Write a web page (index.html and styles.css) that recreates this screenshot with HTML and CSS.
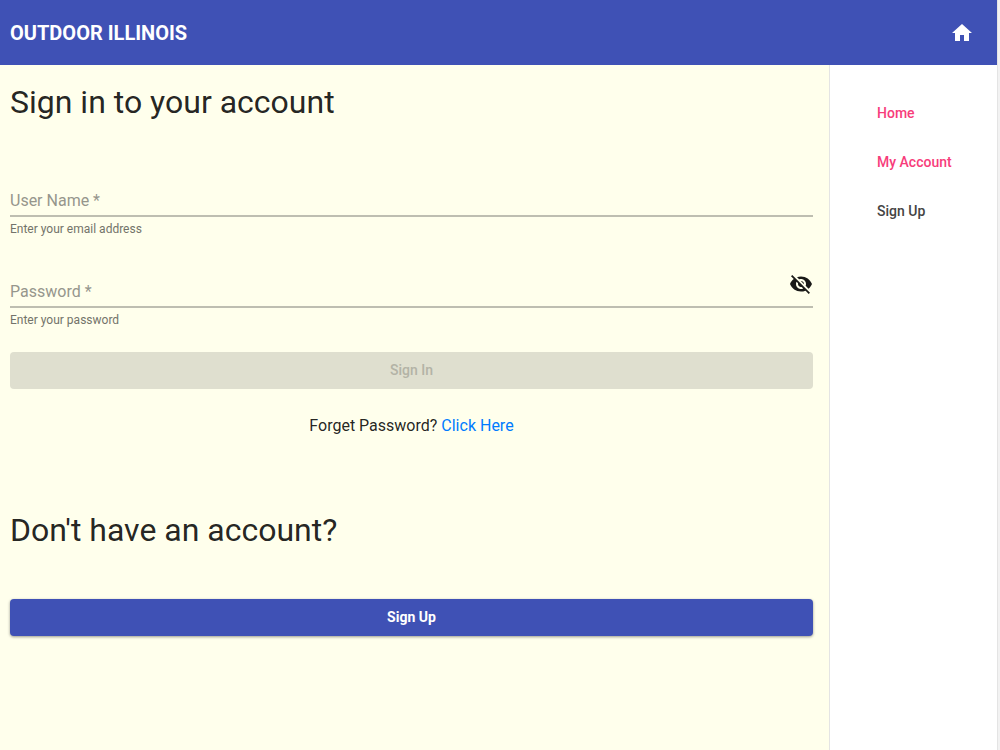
FILE: index.html
```html
<!DOCTYPE html>
<html lang="en">
<head>
    <meta charset="utf-8">
    <meta name="viewport" content="width=device-width, initial-scale=1">
    <title>Outdoor Illinois</title>
    <link rel="stylesheet" href="styles.css">
</head>

<body>
<div class="page">
    <header class="toolbar">
        <span class="brand">OUTDOOR ILLINOIS</span>
        <a class="home-link" href="#" aria-label="Home">
            <svg class="icon" viewBox="0 0 24 24"><path d="M10 20v-6h4v6h5v-8h3L12 3 2 12h3v8z"/></svg>
        </a>
    </header>

    <div class="container">
        <main class="content">
            <h1>Sign in to your account</h1>
            <form class="sign-in">
                <div class="field">
                    <div class="field-box">
                        <label for="userName">User Name *</label>
                        <input type="text" id="userName">
                    </div>
                    <div class="hint">Enter your email address</div>
                </div>

                <div class="field">
                    <div class="field-box">
                        <label for="password">Password *</label>
                        <input type="password" id="password">
                        <button class="toggle" type="button" aria-label="Show password">
                            <svg class="icon" viewBox="0 0 24 24"><path d="M12 7c2.760 0 5 2.240 5 5 0 .65-.13 1.260-.36 1.830l2.920 2.920c1.510-1.260 2.700-2.890 3.430-4.750-1.730-4.390-6-7.500-11-7.500-1.400 0-2.740.25-3.980.7l2.160 2.160C10.740 7.130 11.350 7 12 7zM2 4.270l2.280 2.280.46.46C3.080 8.300 1.780 10.020 1 12c1.730 4.390 6 7.500 11 7.500 1.550 0 3.030-.3 4.380-.84l.42.42L19.730 22 21 20.730 3.270 3 2 4.270zM7.530 9.800l1.550 1.550c-.05.21-.08.43-.08.65 0 1.660 1.340 3 3 3 .22 0 .44-.03.65-.08l1.550 1.550c-.67.33-1.410.53-2.200.53-2.760 0-5-2.240-5-5 0-.79.2-1.530.53-2.200zm4.310-.78l3.150 3.150.02-.16c0-1.660-1.340-3-3-3l-.17.01z"/></svg>
                        </button>
                    </div>
                    <div class="hint">Enter your password</div>
                </div>

                <button class="btn" type="submit" disabled>Sign In</button>
            </form>
            <p class="forgot">Forget Password? <a href="#">Click Here</a></p>

            <h2>Don't have an account?</h2>
            <button class="btn btn-primary" type="button">Sign Up</button>
        </main>

        <nav class="sidebar">
            <a class="accent" href="#">Home</a>
            <a class="accent" href="#">My Account</a>
            <a href="#">Sign Up</a>
        </nav>
    </div>
</div>
</body>
</html>
```

FILE: styles.css
```css
* {
    box-sizing: border-box;
}

body {
    margin: 0;
    padding-right: 2px;
    background-color: #f2f2f2;
    color: rgba(0, 0, 0, 0.87);
    font-family: Roboto, "Liberation Sans", sans-serif;
    font-size: 16px;
    line-height: 24px;
}

.page {
    display: flex;
    flex-direction: column;
    min-height: 100vh;
    border-right: 1px solid #e4e4e4;
    background-color: white;
}

.toolbar {
    display: flex;
    align-items: center;
    justify-content: space-between;
    padding: 21px 23px 20px 10px;
    background-color: #3f51b5;
    color: white;
}

.brand {
    font-size: 20px;
    font-weight: 700;
}

.home-link {
    display: flex;
    color: white;
}

.icon {
    display: block;
    width: 24px;
    height: 24px;
    fill: currentColor;
}

.container {
    display: flex;
    flex: 1;
}

.content {
    flex: 1;
    padding: 17px 16px 16px 10px;
    background-color: #ffffec;
}

h1, h2 {
    margin: 0;
    font-size: 32px;
    font-weight: 400;
    line-height: 40px;
}

.sign-in {
    padding-top: 67px;
}

.field {
    margin-bottom: 42px;
}

.field + .field {
    margin-bottom: 23px;
}

.field-box {
    display: grid;
    grid-template-columns: 1fr auto;
    align-items: center;
    border-bottom: 2px solid #bebeb1;
}

.field-box label,
.field-box input {
    grid-row: 1;
    grid-column: 1;
    height: 26px;
}

.field-box label {
    color: #96968c;
}

.field-box input {
    width: 100%;
    padding: 0;
    border: none;
    outline: none;
    background: transparent;
    font: inherit;
}

.toggle {
    grid-row: 1;
    grid-column: 2;
    align-self: start;
    height: 24px;
    margin-top: -8px;
    padding: 0;
    border: none;
    background: transparent;
    color: #1a1a18;
}

.hint {
    padding-top: 3px;
    color: #73736a;
    font-size: 12px;
    line-height: 18px;
}

.btn {
    display: block;
    width: 100%;
    padding: 0;
    border: none;
    border-radius: 4px;
    background-color: #dfdfcf;
    color: #b3b3a6;
    font-family: inherit;
    font-size: 14px;
    font-weight: 500;
    line-height: 37px;
}

.btn-primary {
    background-color: #3f51b5;
    color: white;
    font-weight: 700;
    box-shadow: 0 1px 3px rgba(0, 0, 0, 0.4);
}

.forgot {
    margin: 25px 0 72px;
    text-align: center;
}

.forgot a {
    color: #007bff;
    text-decoration: none;
}

h2 {
    margin-bottom: 49px;
}

.sidebar {
    display: flex;
    flex-direction: column;
    gap: 25px;
    width: 168px;
    padding: 36px 16px 36px 47px;
    border-left: 1px solid #e4e4e4;
    font-size: 14px;
    font-weight: 500;
}

.sidebar a {
    color: #444444;
    text-decoration: none;
}

.sidebar .accent {
    color: #f73d7b;
}
```
